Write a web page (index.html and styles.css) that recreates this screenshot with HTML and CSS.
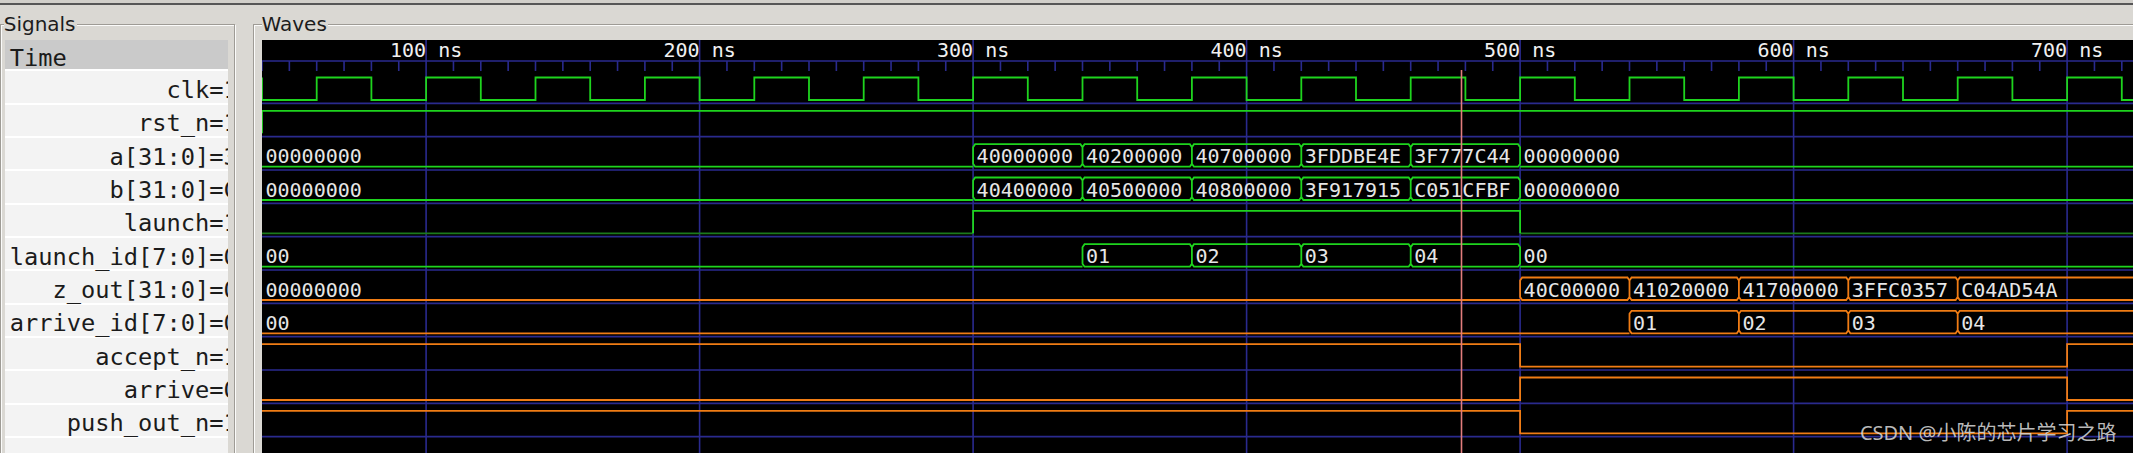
FILE: index.html
```html
<!DOCTYPE html>
<html lang="en">
<head>
<meta charset="utf-8">
<title>GTKWave</title>
<link rel="stylesheet" href="styles.css">
</head>
<body>
<div class="app">
  <div class="topbar"></div>
  <div class="panes">
    <fieldset class="frame frame-signals">
      <legend class="frame-label label-signals">Signals</legend>
      <div class="siglist">
        <div class="sig-head">Time</div>
        <div class="sig"><span class="sig-name">clk=</span><span class="sig-val">1</span></div>
        <div class="sig"><span class="sig-name">rst_n=</span><span class="sig-val">1</span></div>
        <div class="sig"><span class="sig-name">a[31:0]=</span><span class="sig-val">3</span></div>
        <div class="sig"><span class="sig-name">b[31:0]=</span><span class="sig-val">C</span></div>
        <div class="sig"><span class="sig-name">launch=</span><span class="sig-val">1</span></div>
        <div class="sig"><span class="sig-name">launch_id[7:0]=</span><span class="sig-val">0</span></div>
        <div class="sig"><span class="sig-name">z_out[31:0]=</span><span class="sig-val">0</span></div>
        <div class="sig"><span class="sig-name">arrive_id[7:0]=</span><span class="sig-val">0</span></div>
        <div class="sig"><span class="sig-name">accept_n=</span><span class="sig-val">1</span></div>
        <div class="sig"><span class="sig-name">arrive=</span><span class="sig-val">0</span></div>
        <div class="sig"><span class="sig-name">push_out_n=</span><span class="sig-val">1</span></div>
      </div>
    </fieldset>
    <fieldset class="frame frame-waves">
      <legend class="frame-label label-waves">Waves</legend>
      <div class="wavebox">
        <svg class="waves" width="1871.5" height="413" viewBox="261.5 40 1871.5 413" xmlns="http://www.w3.org/2000/svg">
          <g transform="translate(261.5 0) scale(2.735 1) translate(-40 0)">
            <path class="grid" d="M40 61V71M50 61V71M60 61V71M70 61V71M80 61V71M90 61V71M110 61V71M120 61V71M130 61V71M140 61V71M150 61V71M160 61V71M170 61V71M180 61V71M190 61V71M210 61V71M220 61V71M230 61V71M240 61V71M250 61V71M260 61V71M270 61V71M280 61V71M290 61V71M310 61V71M320 61V71M330 61V71M340 61V71M350 61V71M360 61V71M370 61V71M380 61V71M390 61V71M410 61V71M420 61V71M430 61V71M440 61V71M450 61V71M460 61V71M470 61V71M480 61V71M490 61V71M510 61V71M520 61V71M530 61V71M540 61V71M550 61V71M560 61V71M570 61V71M580 61V71M590 61V71M610 61V71M620 61V71M630 61V71M640 61V71M650 61V71M660 61V71M670 61V71M680 61V71M690 61V71M710 61V71M720 61V71"/>
            <path class="grid" d="M100 40V453M200 40V453M300 40V453M400 40V453M500 40V453M600 40V453M700 40V453"/>
            <path class="grid" d="M40 61H730M40 103.33H730M40 136.67H730M40 170H730M40 203.33H730M40 236.67H730M40 270H730M40 303.33H730M40 336.67H730M40 370H730M40 403.33H730M40 436.67H730"/>

            <path class="tr tr-g" d="M40 77.5V100H60V77.5H80V100H100V77.5H120V100H140V77.5H160V100H180V77.5H200V100H220V77.5H240V100H260V77.5H280V100H300V77.5H320V100H340V77.5H360V100H380V77.5H400V100H420V77.5H440V100H460V77.5H480V100H500V77.5H520V100H540V77.5H560V100H580V77.5H600V100H620V77.5H640V100H660V77.5H680V100H700V77.5H720V100H730"/>
            <path class="tr tr-g" d="M40 133.33V110.83H730"/>
            <path class="tr tr-g" d="M40 166.67H300M500 166.67H730M300 163.67V147.17L300.75 144.17H339.25L340 147.17V163.67L339.25 166.67H300.75ZM340 163.67V147.17L340.75 144.17H379.25L380 147.17V163.67L379.25 166.67H340.75ZM380 163.67V147.17L380.75 144.17H419.25L420 147.17V163.67L419.25 166.67H380.75ZM420 163.67V147.17L420.75 144.17H459.25L460 147.17V163.67L459.25 166.67H420.75ZM460 163.67V147.17L460.75 144.17H499.25L500 147.17V163.67L499.25 166.67H460.75Z"/>
            <path class="tr tr-g" d="M40 200H300M500 200H730M300 197V180.5L300.75 177.5H339.25L340 180.5V197L339.25 200H300.75ZM340 197V180.5L340.75 177.5H379.25L380 180.5V197L379.25 200H340.75ZM380 197V180.5L380.75 177.5H419.25L420 180.5V197L419.25 200H380.75ZM420 197V180.5L420.75 177.5H459.25L460 180.5V197L459.25 200H420.75ZM460 197V180.5L460.75 177.5H499.25L500 180.5V197L499.25 200H460.75Z"/>
            <path class="tr tr-dg" d="M40 233.33H300M500 233.33H730"/>
            <path class="tr tr-g" d="M300 233.33V210.83H500V233.33"/>
            <path class="tr tr-g" d="M40 266.67H340M500 266.67H730M340 263.67V247.17L340.75 244.17H379.25L380 247.17V263.67L379.25 266.67H340.75ZM380 263.67V247.17L380.75 244.17H419.25L420 247.17V263.67L419.25 266.67H380.75ZM420 263.67V247.17L420.75 244.17H459.25L460 247.17V263.67L459.25 266.67H420.75ZM460 263.67V247.17L460.75 244.17H499.25L500 247.17V263.67L499.25 266.67H460.75Z"/>

            <path class="tr tr-o" d="M40 300H500M500 297V280.5L500.75 277.5H539.25L540 280.5V297L539.25 300H500.75ZM540 297V280.5L540.75 277.5H579.25L580 280.5V297L579.25 300H540.75ZM580 297V280.5L580.75 277.5H619.25L620 280.5V297L619.25 300H580.75ZM620 297V280.5L620.75 277.5H659.25L660 280.5V297L659.25 300H620.75ZM730 277.5H660.75L660 280.5V297L660.75 300H730"/>
            <path class="tr tr-o" d="M40 333.33H540M540 330.33V313.83L540.75 310.83H579.25L580 313.83V330.33L579.25 333.33H540.75ZM580 330.33V313.83L580.75 310.83H619.25L620 313.83V330.33L619.25 333.33H580.75ZM620 330.33V313.83L620.75 310.83H659.25L660 313.83V330.33L659.25 333.33H620.75ZM730 310.83H660.75L660 313.83V330.33L660.75 333.33H730"/>
            <path class="tr tr-o" d="M40 344.17H500V366.67H700V344.17H730"/>
            <path class="tr tr-o" d="M40 400H500V377.5H700V400H730"/>
            <path class="tr tr-o" d="M40 410.83H500V433.33H700V410.83H730"/>
          </g>

          <g class="tl-label">
            <text x="425.6" y="56.7">100 ns</text>
            <text x="699.1" y="56.7">200 ns</text>
            <text x="972.6" y="56.7">300 ns</text>
            <text x="1246.1" y="56.7">400 ns</text>
            <text x="1519.6" y="56.7">500 ns</text>
            <text x="1793.1" y="56.7">600 ns</text>
            <text x="2066.6" y="56.7">700 ns</text>
          </g>

          <g class="vtext">
            <text x="265" y="163.3">00000000</text>
            <text x="976.1" y="163.3">40000000</text>
            <text x="1085.5" y="163.3">40200000</text>
            <text x="1194.9" y="163.3">40700000</text>
            <text x="1304.3" y="163.3">3FDDBE4E</text>
            <text x="1413.7" y="163.3">3F777C44</text>
            <text x="1523.1" y="163.3">00000000</text>

            <text x="265" y="196.6">00000000</text>
            <text x="976.1" y="196.6">40400000</text>
            <text x="1085.5" y="196.6">40500000</text>
            <text x="1194.9" y="196.6">40800000</text>
            <text x="1304.3" y="196.6">3F917915</text>
            <text x="1413.7" y="196.6">C051CFBF</text>
            <text x="1523.1" y="196.6">00000000</text>

            <text x="265" y="263.3">00</text>
            <text x="1085.5" y="263.3">01</text>
            <text x="1194.9" y="263.3">02</text>
            <text x="1304.3" y="263.3">03</text>
            <text x="1413.7" y="263.3">04</text>
            <text x="1523.1" y="263.3">00</text>

            <text x="265" y="296.6">00000000</text>
            <text x="1523.1" y="296.6">40C00000</text>
            <text x="1632.5" y="296.6">41020000</text>
            <text x="1741.9" y="296.6">41700000</text>
            <text x="1851.3" y="296.6">3FFC0357</text>
            <text x="1960.7" y="296.6">C04AD54A</text>

            <text x="265" y="329.9">00</text>
            <text x="1632.5" y="329.9">01</text>
            <text x="1741.9" y="329.9">02</text>
            <text x="1851.3" y="329.9">03</text>
            <text x="1960.7" y="329.9">04</text>
          </g>

          <path class="cursor" d="M1461 70V453"/>
          <text class="watermark" x="2116" y="440">CSDN @小陈的芯片学习之路</text>
        </svg>
      </div>
    </fieldset>
  </div>
</div>
</body>
</html>
```

FILE: styles.css
```css
* {
  box-sizing: border-box;
}

html,
body {
  margin: 0;
  padding: 0;
}

body {
  width: 2133px;
  height: 453px;
  overflow: hidden;
  background: #dad8d3;
  font-family: "DejaVu Sans", sans-serif;
}

.app {
  width: 2133px;
  height: 453px;
  overflow: hidden;
}

.topbar {
  height: 5px;
  background: #d1cfca;
  border-bottom: 2px solid #565656;
}

.panes {
  display: flex;
  gap: 18px;
  padding-top: 7.8px;
}

.frame {
  flex: none;
  margin: 0;
  min-inline-size: 0;
  height: 470px;
  border: 1px solid #9e9b95;
  box-shadow: inset 1px 1px 0 #fbfbfa, 1px 1px 0 #fbfbfa;
}

.frame-signals {
  width: 235px;
  padding: 4.2px 5.7px 0 3.7px;
}

.frame-waves {
  width: 1900px;
  padding: 4.2px 0 0 7.5px;
}

.frame-label {
  padding: 0 1.5px 0 0;
  font-size: 20px;
  line-height: 23px;
  color: #1c1c1c;
  background: #dad8d3;
}

.label-signals {
  margin-left: -1px;
}

.label-waves {
  margin-left: 0;
}

.siglist {
  width: 223.6px;
  height: 430px;
  overflow: hidden;
  background: #f3f3f3;
}

.sig-head {
  height: 31.5px;
  padding: 5px 0 0 5.1px;
  border-bottom: 2px solid #ffffff;
  background: #cacaca;
  font: 23.7px/27px "DejaVu Sans Mono", monospace;
  color: #1b1b1b;
  white-space: pre;
}

.sig {
  height: 33.333px;
  padding-top: 5.6px;
  border-bottom: 2px solid #ffffff;
  display: grid;
  grid-template-columns: 218.9px 14px;
  font: 23.7px/27px "DejaVu Sans Mono", monospace;
  color: #1b1b1b;
  white-space: pre;
}

.sig-name {
  text-align: right;
}

.sig-val {
  overflow: hidden;
}

.wavebox {
  width: 1871.5px;
  height: 413px;
  background: #000000;
  overflow: hidden;
}

.waves {
  display: block;
}

.grid {
  fill: none;
  stroke: #2a2a8e;
  stroke-width: 1.6;
  vector-effect: non-scaling-stroke;
}

.tr {
  fill: none;
  stroke-width: 1.8;
  vector-effect: non-scaling-stroke;
}

.tr-g {
  stroke: #1ed41e;
}

.tr-dg {
  stroke: #1c7a1c;
}

.tr-o {
  stroke: #f07c14;
}

.tl-label text {
  font: 20px "DejaVu Sans Mono", monospace;
  fill: #f0f0f0;
  text-anchor: middle;
  white-space: pre;
}

.vtext text {
  font: 20px "DejaVu Sans Mono", monospace;
  fill: #e6e6e6;
}

.cursor {
  fill: none;
  stroke: #e27d7d;
  stroke-width: 1.6;
}

.watermark {
  font: 20px "Noto Sans", "Noto Sans CJK SC", sans-serif;
  fill: #d4d4d4;
  fill-opacity: 0.88;
  text-anchor: end;
}
```
